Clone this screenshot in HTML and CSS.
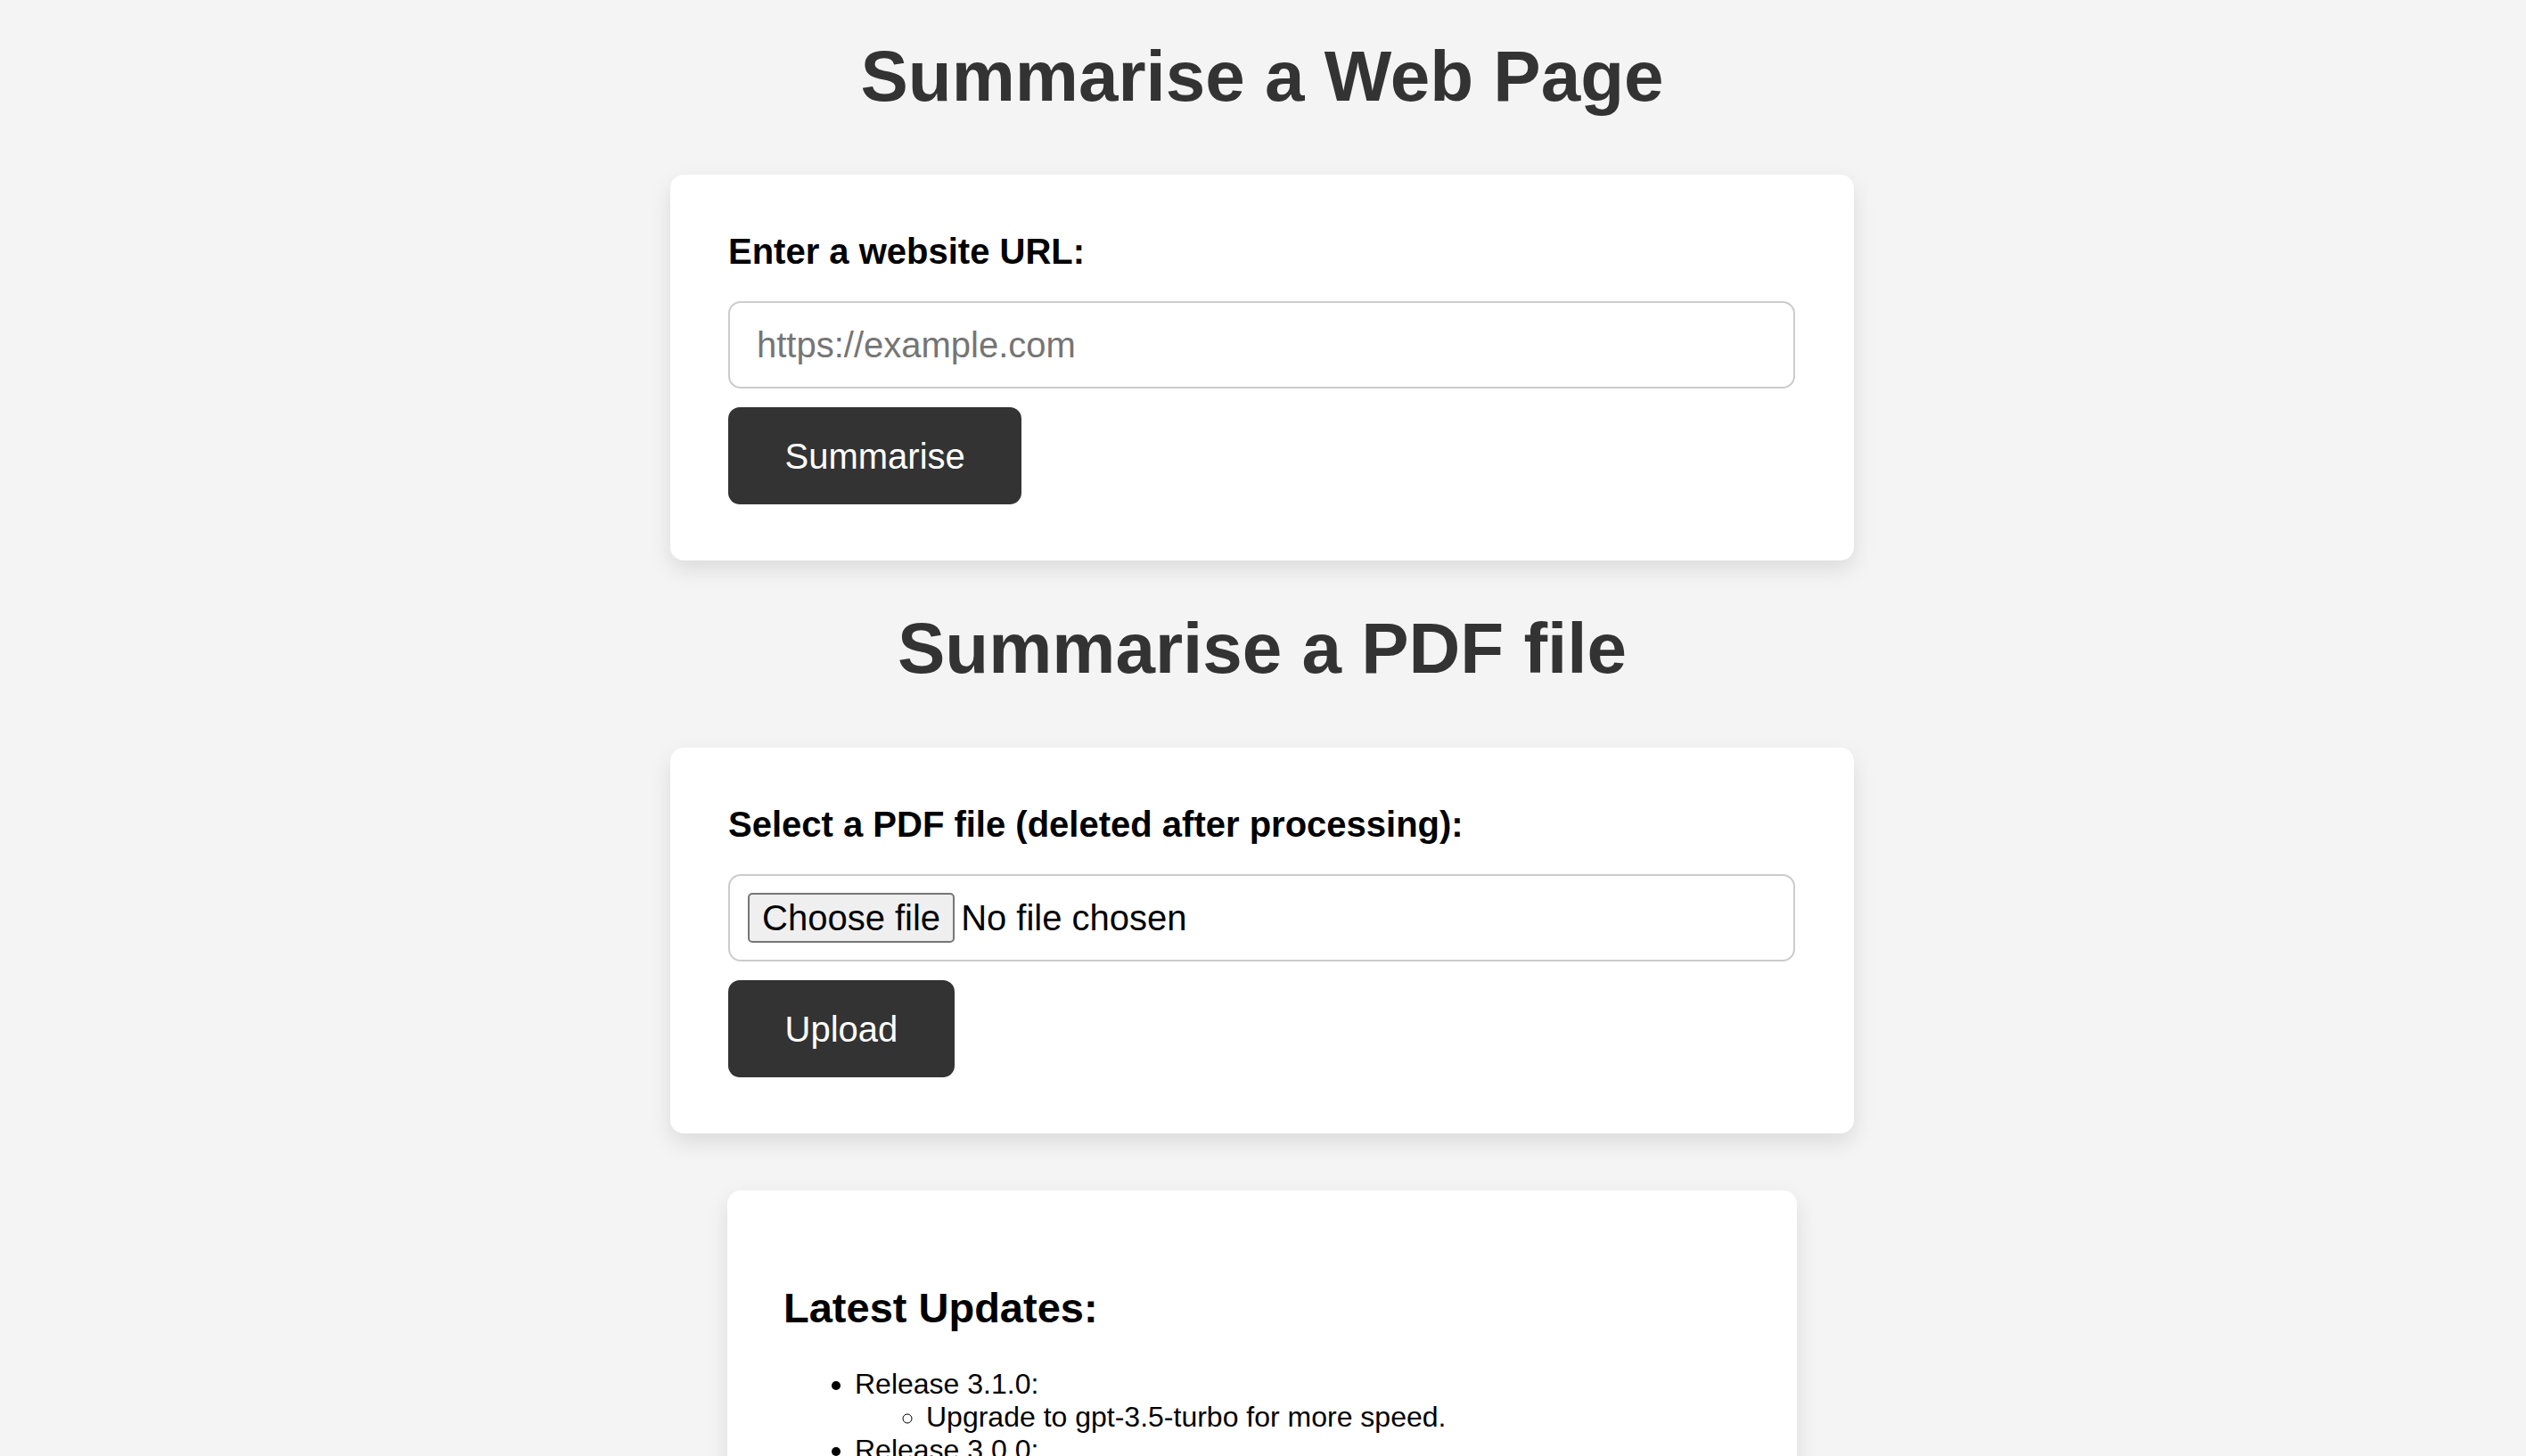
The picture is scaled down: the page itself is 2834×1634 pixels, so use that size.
FILE: index.html
```html
<!DOCTYPE html>
<html lang="en">
<head>
<meta charset="utf-8">
<title>Summarise</title>
<link rel="stylesheet" href="styles.css">
</head>
<body>
<div class="page">
  <h1 class="title">Summarise a Web Page</h1>
  <form class="card">
    <label class="field-label" for="url">Enter a website URL:</label>
    <input class="text-input" type="text" id="url" placeholder="https://example.com">
    <button class="btn" type="button">Summarise</button>
  </form>

  <h1 class="title title-second">Summarise a PDF file</h1>
  <form class="card">
    <label class="field-label" for="pdf">Select a PDF file (deleted after processing):</label>
    <label class="file-box">
      <input class="file-native" type="file" id="pdf" accept="application/pdf">
      <span class="file-btn">Choose file</span>
      <span class="file-name">No file chosen</span>
    </label>
    <button class="btn" type="button">Upload</button>
  </form>

  <div class="card updates">
    <h3 class="updates-title">Latest Updates:</h3>
    <ul class="updates-list">
      <li>Release 3.1.0:
        <ul class="sub-list">
          <li>Upgrade to gpt-3.5-turbo for more speed.</li>
        </ul>
      </li>
      <li>Release 3.0.0:</li>
    </ul>
  </div>
</div>
</body>
</html>
```

FILE: styles.css
```css
html, body {
  margin: 0;
  padding: 0;
}

body {
  background: #f4f4f4;
  font-family: "Liberation Sans", Arial, Helvetica, sans-serif;
  color: #000;
}

.page {
  width: 1328px;
  margin: 0 0 0 calc(50% - 665px);
  padding-top: 40px;
}

.title {
  margin: 0 0 64px;
  font-size: 80px;
  line-height: 92px;
  font-weight: 700;
  color: #333;
  text-align: center;
}

.title-second {
  margin-top: 53px;
  margin-bottom: 65px;
}

.card {
  display: block;
  margin: 0;
  background: #fff;
  border-radius: 15px;
  padding: 63px 66px 63px 65px;
  box-shadow: 0 10px 25px rgba(0, 0, 0, 0.1);
}

.field-label {
  display: block;
  font-size: 40px;
  line-height: 46px;
  font-weight: 700;
  margin-bottom: 33px;
}

.text-input {
  display: block;
  box-sizing: border-box;
  width: 100%;
  margin: 0 0 21px;
  padding: 24px 30px;
  font-family: "Liberation Sans", Arial, sans-serif;
  font-size: 40px;
  line-height: 46px;
  border: 2px solid #ccc;
  border-radius: 14px;
  background: #fff;
  color: #000;
  outline: none;
}

.text-input::placeholder {
  color: #757575;
}

.file-box {
  display: flex;
  align-items: center;
  box-sizing: border-box;
  width: 100%;
  height: 98px;
  margin: 0 0 21px;
  padding: 0 20px;
  border: 2px solid #ccc;
  border-radius: 14px;
  background: #fff;
  font-size: 40px;
  line-height: 46px;
  color: #000;
}

.file-native {
  display: none;
}

.file-btn {
  display: block;
  padding: 3px 14px;
  margin-right: 7px;
  border: 2px solid #767676;
  border-radius: 5px;
  background: #efefef;
  color: #000;
}

.file-name {
  display: block;
}

.btn {
  display: block;
  margin: 0;
  padding: 31.5px 63.5px;
  border: 0;
  border-radius: 13px;
  background: #333;
  color: #fff;
  font-family: "Liberation Sans", Arial, sans-serif;
  font-size: 40px;
  line-height: 46px;
}

.updates {
  margin: 64px 64px 0;
  padding: 63px;
}

.updates-title {
  margin: 42px 0 40px;
  font-size: 47px;
  line-height: 54px;
  font-weight: 700;
}

.updates-list {
  margin: 0;
  padding-left: 80px;
  font-size: 32px;
  line-height: 36.8px;
  list-style: disc;
}

.sub-list {
  margin: 0;
  padding-left: 80px;
  list-style: circle;
}
```
